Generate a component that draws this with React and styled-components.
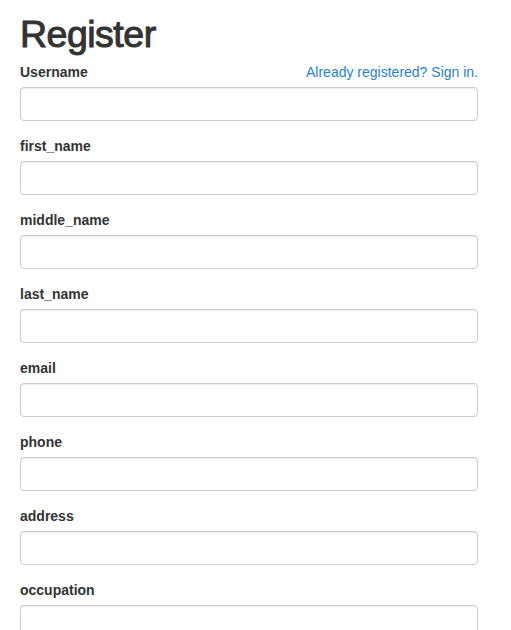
import React from "react";
import styled, { createGlobalStyle } from "styled-components";

const Global = createGlobalStyle`
  html, body { margin: 0; padding: 0; background: #fff; }
  body {
    font-family: "Liberation Sans", Arial, Helvetica, sans-serif;
    font-size: 14px;
    line-height: 1.42857;
    color: #333;
  }
  * { box-sizing: border-box; }
`;

const Page = styled.div`
  padding: 14px 33px 0 20px;
`;

const Title = styled.h1`
  margin: 0 0 8px;
  font-size: 37.5px;
  font-weight: 500;
  line-height: 40px;
  letter-spacing: -0.5px;
  color: #333;
  -webkit-text-stroke: 1px #333;
`;

const Group = styled.div`
  margin-bottom: 15px;
`;

const LabelRow = styled.div`
  display: flex;
  justify-content: space-between;
  align-items: baseline;
  margin-bottom: 5px;
`;

const Label = styled.label`
  font-weight: 700;
  font-size: 14px;
  line-height: 20px;
  color: #333;
`;

const Link = styled.a`
  color: #2a7fcf;
  text-decoration: none;
  font-size: 14px;
  line-height: 20px;
`;

const Input = styled.input`
  display: block;
  width: 100%;
  height: 34px;
  padding: 6px 12px;
  font-size: 14px;
  font-family: inherit;
  color: #555;
  background: #fff;
  border: 1px solid #ccc;
  border-radius: 4px;
  box-shadow: inset 0 1px 1px rgba(0, 0, 0, 0.075);
  outline: none;
`;

const fields = [
  "Username",
  "first_name",
  "middle_name",
  "last_name",
  "email",
  "phone",
  "address",
  "occupation",
];

export default function App() {
  return (
    <>
      <Global />
      <Page>
        <Title>Register</Title>
        {fields.map((f, i) => (
          <Group key={f}>
            <LabelRow>
              <Label htmlFor={f}>{f}</Label>
              {i === 0 && <Link href="#">Already registered? Sign in.</Link>}
            </LabelRow>
            <Input id={f} type="text" />
          </Group>
        ))}
      </Page>
    </>
  );
}
